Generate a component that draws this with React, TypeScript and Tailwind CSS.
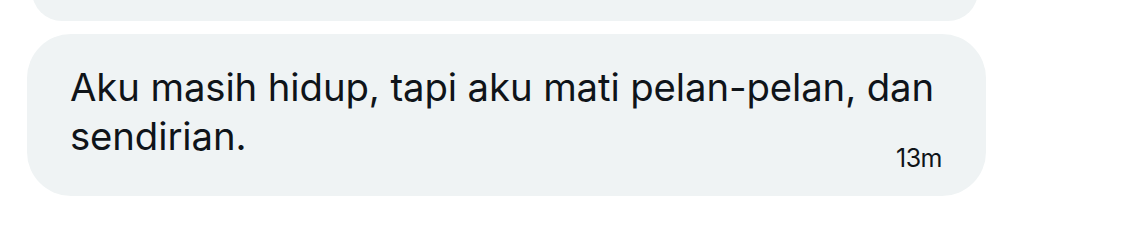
export default function App() {
	return (
		<div className="w-[1122px] h-[243px] overflow-hidden bg-white flex flex-col gap-[13px] pl-[27px]" style={{ fontFamily: "Inter, 'Noto Sans', sans-serif" }}>
			{/* previous message, cut off at the top */}
			<div className="ml-[5px] w-[946px] h-[60px] -mt-[39px] shrink-0 rounded-[42px] bg-[#eff3f4]" />

			<div className="w-[959px] h-[162px] shrink-0 rounded-[44px] bg-[#eff3f4] pl-[43px] pr-[40px] pt-[29px] flex flex-col text-[#0f1419]">
				<p className="text-[38.3px] leading-[49px] tracking-[-0.1px]">
					Aku masih hidup, tapi aku mati pelan-pelan, dan sendirian.
				</p>
				<div className="flex justify-end pr-[4px] -mt-[18px]">
					<span className="text-[25px] leading-[30px] tracking-[-0.5px]">13m</span>
				</div>
			</div>
		</div>
	);
}
